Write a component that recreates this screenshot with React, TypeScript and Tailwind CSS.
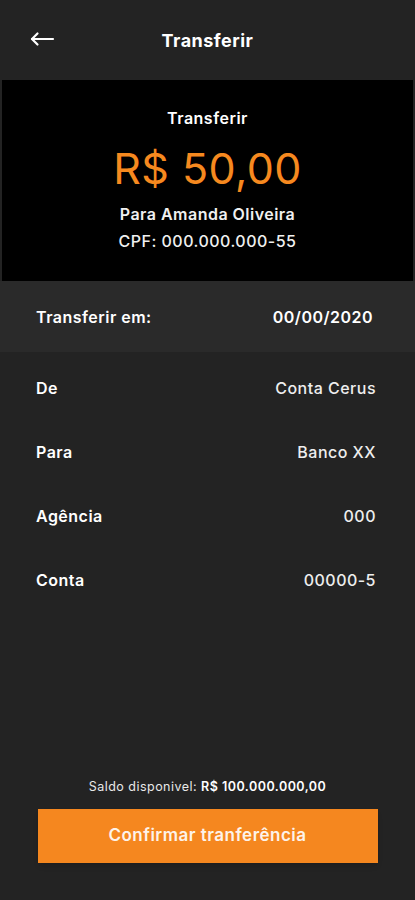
const ROWS = [
  { label: "De", value: "Conta Cerus" },
  { label: "Para", value: "Banco XX" },
  { label: "Agência", value: "000" },
  { label: "Conta", value: "00000-5" },
];

export default function App() {
  return (
    <div
      className="w-[415px] h-[900px] bg-[#232323] text-white flex flex-col tracking-[0.03em]"
      style={{ fontFamily: "Inter, 'Noto Sans', sans-serif" }}
    >
      {/* Header */}
      <div className="h-[80px] flex items-center relative">
        <button className="absolute left-[29px] top-[31px] text-white">
          <svg width="26" height="16" viewBox="0 0 26 16" fill="none" stroke="currentColor" strokeWidth="2.2" strokeLinecap="round" strokeLinejoin="round">
            <path d="M24 8H3" />
            <path d="M8.5 2.5L3 8l5.5 5.5" />
          </svg>
        </button>
        <h1 className="w-full text-center text-[18px] font-bold">Transferir</h1>
      </div>

      {/* Amount panel */}
      <div className="mx-[2px] h-[201px] bg-black flex flex-col items-center pt-[27px]">
        <p className="text-[16px] font-semibold leading-[22px]">Transferir</p>
        <p className="text-[43px] leading-[52px] text-[#f6891f] mt-[13px] tracking-[0.01em]">R$ 50,00</p>
        <p className="text-[16px] font-semibold leading-[22px] mt-[9px] text-[#f0f0f0]">Para Amanda Oliveira</p>
        <p className="text-[16px] font-medium leading-[22px] mt-[5px] text-[#f0f0f0]">CPF: 000.000.000-55</p>
      </div>

      {/* Date row */}
      <div className="h-[71px] bg-[#2a2a2a] flex items-center justify-between pl-[36px] pr-[42px]">
        <span className="text-[16px] font-semibold">Transferir em:</span>
        <span className="text-[16px] font-semibold">00/00/2020</span>
      </div>

      {/* Details */}
      <div className="flex flex-col pt-[4px]">
        {ROWS.map((row) => (
          <div key={row.label} className="h-[64px] flex items-center justify-between pl-[36px] pr-[39px]">
            <span className="text-[16px] font-semibold">{row.label}</span>
            <span className="text-[16px] font-medium text-[#eeeeee]">{row.value}</span>
          </div>
        ))}
      </div>

      <div className="flex-1" />

      {/* Footer */}
      <div className="flex flex-col items-center pb-[37px]">
        <p className="text-[12.5px] text-[#e8e8e8] mb-[12px]">
          Saldo disponivel: <span className="font-semibold text-white">R$ 100.000.000,00</span>
        </p>
        <button className="w-[340px] h-[54px] bg-[#f5871f] shadow-md text-[17px] font-semibold text-[#fdf3ea]">
          Confirmar tranferência
        </button>
      </div>
    </div>
  );
}
